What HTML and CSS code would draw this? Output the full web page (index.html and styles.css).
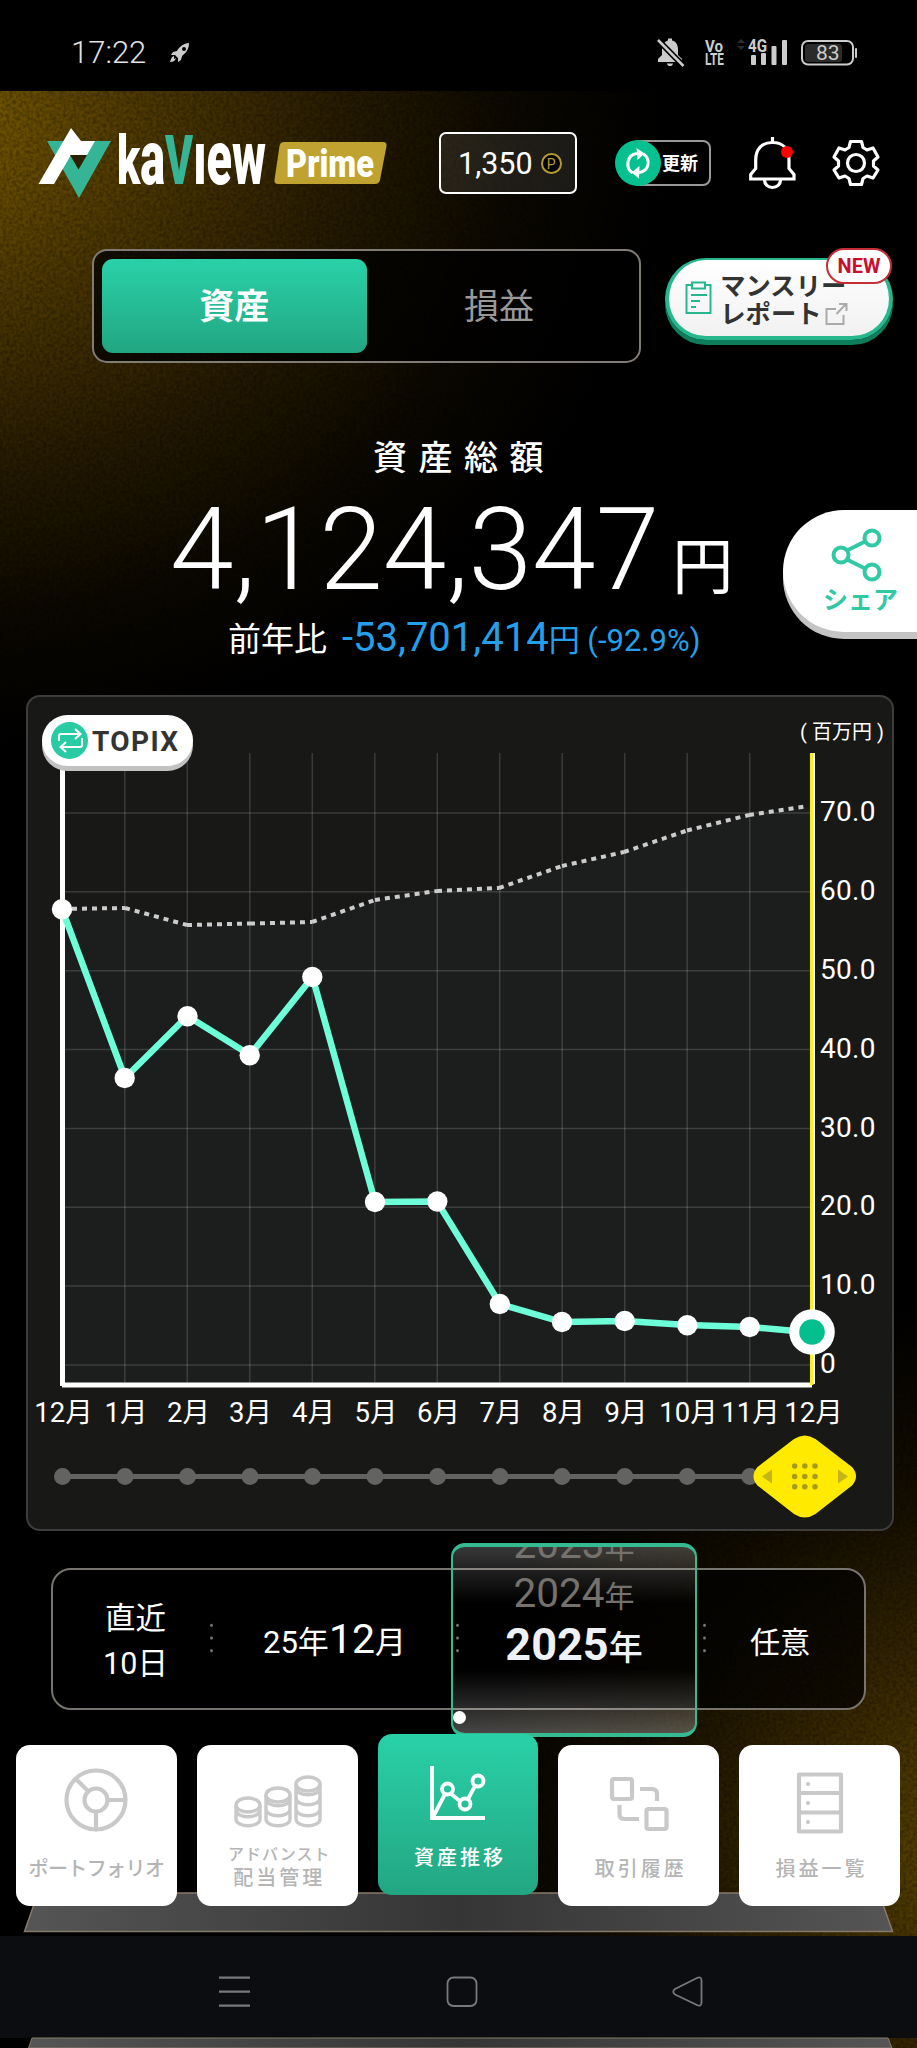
FILE: index.html
```html
<!DOCTYPE html>
<html lang="ja">

<head>
    <meta charset="UTF-8">
    <meta name="viewport" content="width=device-width, initial-scale=1.0">
    <title>kaView Prime</title>
    <link rel="stylesheet" href="styles.css">
</head>

<body>
    <div class="screen">
        <svg class="grain" width="917" height="1957">
            <filter id="noise" x="0" y="0" width="100%" height="100%">
                <feTurbulence type="fractalNoise" baseFrequency="0.3" numOctaves="2" seed="4" />
                <feColorMatrix values="0 0 0 0 0  0 0 0 0 0  0 0 0 0 0  2.2 0 0 0 -.75" />
            </filter>
            <rect width="917" height="1957" filter="url(#noise)" />
        </svg>

        <!-- Status bar -->
        <div class="status">
            <span class="clock">17:22</span>
            <svg class="rocket" width="20" height="20" viewBox="0 0 20 20" fill="#ccc">
                <path fill-rule="evenodd" d="M19 0C14 0 9 4 7 8L3 9 1 12l4 0 3 3 0 4 3-2 1-4C16 10 19 6 19 0zM14 4a2 2 0 1 1 0 4 2 2 0 0 1 0-4z" />
                <path d="M4 13C1 14 1 17 0 19c3 0 5-1 6-4l-2 1z" />
            </svg>
            <svg class="status-icons" width="202" height="30" viewBox="0 0 202 30" fill="#ccc">
                <path d="M1 24v-3l4-4V11C5 6 9 3 11 2.500V.5h4v2C18 3 21 6 21 11v6l4 4v3zM10 25.500h6c-.5 2-1.500 2.500-3 2.500s-2.500-.5-3-2.500z" />
                <path d="M0 1L26 27.500" stroke="#000" stroke-width="6" />
                <path d="M1 2L26.500 28" stroke="#ccc" stroke-width="2.500" />
                <text x="48" y="13.500" class="net" textLength="18" lengthAdjust="spacingAndGlyphs">Vo</text>
                <text x="48" y="27" class="net" textLength="19" lengthAdjust="spacingAndGlyphs">LTE</text>
                <path d="M80 5l4-4 4 4zM80 8l4 4 4-4z" fill="#2c2c2c" />
                <text x="91" y="13.500" class="net lte" textLength="19" lengthAdjust="spacingAndGlyphs">4G</text>
                <rect x="94" y="17" width="5" height="10" rx="1" />
                <rect x="104" y="15" width="5" height="12" rx="1" />
                <rect x="114.500" y="8" width="5" height="19" rx="1" />
                <rect x="125" y="2" width="5" height="25" rx="1" />
                <rect x="145" y="3" width="51" height="23.500" rx="6" fill="none" stroke="#ccc" stroke-width="2" />
                <rect x="148" y="6" width="37" height="18" rx="3" fill="#2b2b2b" />
                <rect x="198" y="10" width="2" height="10" rx="1" />
                <text x="159" y="22" class="battery">83</text>
            </svg>
        </div>

        <!-- Header -->
        <header class="header">
            <svg class="logo" width="350" height="74" viewBox="38 126 350 74">
                <path d="M47 141H111L79 198z" fill="#36b596" />
                <path d="M71 128L81 141H95L87 155H71L54 184H38.500z" fill="#fff" />
                <path d="M70 155H87L78.500 169.500z" fill="#2b2000" />
                <text y="184" class="brand" textLength="149" lengthAdjust="spacingAndGlyphs" x="117"><tspan class="tall">k</tspan>a<tspan class="tall v">V</tspan>ıew</text>
                <path d="M284 142H383q4 0 3.500 4L380 180q-.8 4-5 4H278q-4 0-3.500-4L279.500 146q.7-4 4.500-4z" fill="#bfa22f" />
                <text x="286" y="176.500" class="prime" textLength="88" lengthAdjust="spacingAndGlyphs">Prime</text>
            </svg>
            <div class="points">1,350<span class="point-mark">P</span></div>
            <div class="refresh">
                <svg width="46" height="46" viewBox="0 0 46 46" fill="none" stroke="#fff" stroke-width="3">
                    <circle cx="23" cy="23" r="23" fill="#06c08f" stroke="none" />
                    <path d="M17.500 33C10.500 28 11 15 22 13.500M28.500 14c7 5 6.500 17-4.500 18.500" />
                    <path d="M21.500 8l8 5.500-7 6.500zM24.500 26l-8 6.500 7.500 6z" fill="#fff" stroke="none" />
                </svg>
                <span>更新</span>
            </div>
            <svg class="bell" width="47" height="52" viewBox="0 0 47 52" fill="none" stroke="#fff" stroke-width="3.200">
                <path d="M23.500 0v6M1.700 42v-4.500l5-6V23C6.700 12 13 5.500 23.500 5.500S40 12 40 23v8.500l5 6V42z" />
                <path d="M15.500 43c0 4.500 3.500 7.500 8 7.500s8-3 8-7.500" />
                <circle cx="38" cy="15" r="6" fill="red" stroke="none" />
            </svg>
            <svg class="gear" width="48" height="48" viewBox="0 0 48 48" fill="none" stroke="#fff" stroke-width="3.200" stroke-linejoin="round">
                <path d="M18.500 2.500h11l1.500 6 4 2.500 6-2 5 9-4.500 4v5l4.500 4-5 8-6-2-4 2.500-1.500 6h-11l-1.500-6-4-2.500-6 2-5-8 4.500-4v-5L2 18l5-9 6 2 4-2.500z" />
                <circle cx="24" cy="24" r="8.500" />
            </svg>
        </header>

        <!-- Tabs -->
        <div class="tab-row">
            <div class="tabs">
                <div class="tab active">資産</div>
                <div class="tab">損益</div>
            </div>
            <div class="report">
                <svg width="27" height="34" viewBox="0 0 27 34" fill="none" stroke="#27b78e" stroke-width="2">
                    <path d="M7 4H1.500v28h24V4H20M7 1.500h13v6H7zM6 14h16M6 20h9M6 26h5" />
                </svg>
                <div class="report-text">マンスリー<br>レポート<svg width="23" height="22" viewBox="0 0 23 22" fill="none" stroke="#aaa" stroke-width="2">
                        <path d="M11 6H1.500v15h17V12M14 1h7.500v7M21 1L11.500 11" />
                    </svg></div>
                <span class="new">NEW</span>
            </div>
        </div>

        <!-- Total -->
        <section class="total">
            <h1>資産総額</h1>
            <p class="amount">4,124,347<span>円</span></p>
            <p class="diff">前年比<span class="minus">-53,701,414<small>円 (-92.9%)</small></span></p>
            <div class="share">
                <svg width="52" height="54" viewBox="0 0 52 54" fill="none" stroke="#30c9a4" stroke-width="4">
                    <path d="M15 23L35 13M15 31L35 41" />
                    <circle cx="10" cy="27" r="7.500" />
                    <circle cx="41" cy="10" r="7.500" />
                    <circle cx="41" cy="44" r="7.500" />
                </svg>
                <span>シェア</span>
            </div>
        </section>

        <!-- Chart -->
        <section class="chart">
            <div class="topix">
                <svg width="37" height="37" viewBox="0 0 37 37" fill="none" stroke="#fff" stroke-width="2">
                    <circle cx="18.500" cy="18.500" r="18.500" fill="#29cba4" stroke="none" />
                    <path d="M8 19v-5q0-2 2-2h19M24 7l5.500 5-5.500 5M31 16v7q0 2-2 2H10M15 20l-5.500 5 5.500 5" />
                </svg>
                <span>TOPIX</span>
            </div>
            <svg class="plot" width="864" height="832" viewBox="28 697 864 832">
                <path d="M62 909L125 908 187 925 250 923 312 922 375 900 437 891 499 888 562 866 624 852 687 830 749 815 812 806V1385H62z" fill="#1b1e1d" />
                <g stroke="#fff" stroke-opacity=".15" stroke-width="1.500">
                    <path d="M124.800 753V1383M187.300 753V1383M249.800 753V1383M312.300 753V1383M374.800 753V1383M437.300 753V1383M499.700 753V1383M562.200 753V1383M624.700 753V1383M687.200 753V1383M749.700 753V1383" />
                    <path d="M62 813H812M62 891.800H812M62 970.700H812M62 1049.500H812M62 1128.400H812M62 1207.200H812M62 1286.100H812M62 1365H812" />
                </g>
                <path d="M62.500 753V1386" stroke="#fff" stroke-width="5" />
                <path d="M62 1385H812" stroke="#fff" stroke-width="5" />
                <path d="M814 753V1384" stroke="#fff" stroke-width="2" />
                <path d="M811.700 753V1385" stroke="#f8ee30" stroke-width="3.500" />
                <g fill="none" stroke="#ccc" stroke-width="4" stroke-dasharray="5 5">
                    <path d="M62 909L125 908" />
                    <path d="M125 908L187 925" />
                    <path d="M187 925L250 923.500" />
                    <path d="M250 923.500L312 922" />
                    <path d="M312 922L375 900" />
                    <path d="M375 900L437 891" />
                    <path d="M437 891L499 888" />
                    <path d="M499 888L562 866" />
                    <path d="M562 866L624 852" />
                    <path d="M624 852L687 830.500" />
                    <path d="M687 830.500L749 815" />
                    <path d="M749 815L808 806" />
                </g>
                <polyline points="62,909 125,1078 187.500,1016 250,1055 312.500,977 375,1202 437,1201.500 500,1304 562,1322 625,1321 687,1325 749.500,1327 812,1332.500" fill="none" stroke="#6dffd8" stroke-width="6.500" />
                <g fill="#fff">
                    <circle cx="62" cy="909.300" r="10.200" />
                    <circle cx="124.700" cy="1078" r="10.200" />
                    <circle cx="187.500" cy="1016.300" r="10.200" />
                    <circle cx="249.700" cy="1055.300" r="10.200" />
                    <circle cx="312.300" cy="977" r="10.200" />
                    <circle cx="375" cy="1202" r="10.200" />
                    <circle cx="437.300" cy="1201.500" r="10.200" />
                    <circle cx="499.800" cy="1304" r="10.200" />
                    <circle cx="562" cy="1322" r="10.200" />
                    <circle cx="624.700" cy="1321" r="10.200" />
                    <circle cx="687.300" cy="1325.300" r="10.200" />
                    <circle cx="749.700" cy="1327" r="10.200" />
                </g>
                <g class="y-labels">
                    <text x="820" y="821">70.0</text>
                    <text x="820" y="900">60.0</text>
                    <text x="820" y="978.800">50.0</text>
                    <text x="820" y="1057.600">40.0</text>
                    <text x="820" y="1136.500">30.0</text>
                    <text x="820" y="1215.400">20.0</text>
                    <text x="820" y="1294.200">10.0</text>
                    <text x="820" y="1373">0</text>
                </g>
                <text x="800" y="739" class="unit" textLength="84">( 百万円 )</text>
                <circle cx="812" cy="1332" r="22.800" fill="#fff" />
                <circle cx="812" cy="1332" r="12.800" fill="#03bf8e" />
                <g class="x-labels">
                    <text x="63.500" y="1421.500">12月</text>
                    <text x="126" y="1421.500">1月</text>
                    <text x="188.500" y="1421.500">2月</text>
                    <text x="250.500" y="1421.500">3月</text>
                    <text x="313.500" y="1421.500">4月</text>
                    <text x="376" y="1421.500">5月</text>
                    <text x="438.500" y="1421.500">6月</text>
                    <text x="501" y="1421.500">7月</text>
                    <text x="563.500" y="1421.500">8月</text>
                    <text x="626" y="1421.500">9月</text>
                    <text x="688.500" y="1421.500">10月</text>
                    <text x="750.500" y="1421.500">11月</text>
                    <text x="813.500" y="1421.500">12月</text>
                </g>
                <path d="M62 1476.500H800" stroke="#636361" stroke-width="5" />
                <path d="M62.500 1476.500h.01M125 1476.500h.01M187.500 1476.500h.01M250 1476.500h.01M312.500 1476.500h.01M375 1476.500h.01M437.500 1476.500h.01M500 1476.500h.01M562 1476.500h.01M624.800 1476.500h.01M687.300 1476.500h.01M749.800 1476.500h.01" stroke="#636361" stroke-width="17" stroke-linecap="round" />
                <path d="M794 1439q10.700-7 21.500 0L852 1467q8 9 0 18.500L815.500 1514q-10.700 7-21.500 0L757.500 1485.500q-8-9 0-18.500z" fill="#ffea00" />
                <path d="M762 1476.500l10-7v14zM848 1476.500l-10-7v14z" fill="#c4b51c" />
                <path d="M794.600 1466h.01M804.800 1466h.01M815 1466h.01M794.600 1476.500h.01M804.800 1476.500h.01M815 1476.500h.01M794.600 1486.700h.01M804.800 1486.700h.01M815 1486.700h.01" stroke="#a79b18" stroke-width="5.500" stroke-linecap="round" />
            </svg>
        </section>

        <!-- Period -->
        <section class="period">
            <div class="recent">直近<br>10日</div>
            <i class="dots"></i>
            <div class="month">25年<b>12</b>月</div>
            <i class="dots"></i>
            <div class="year-space"></div>
            <i class="dots"></i>
            <div class="custom">任意</div>
            <div class="picker">
                <span class="year">2023<small>年</small></span>
                <span class="year">2024<small>年</small></span>
                <span class="year current">2025<small>年</small></span>
            </div>
            <span class="knob"></span>
        </section>

        <!-- Menu -->
        <nav class="menu">
            <svg class="shelf" width="874" height="42" viewBox="0 0 874 42">
                <linearGradient id="metal">
                    <stop offset="0" stop-color="#555" />
                    <stop offset=".5" stop-color="#353535" />
                    <stop offset="1" stop-color="#555" />
                </linearGradient>
                <path d="M15 1H856L869.500 39.500H1.500z" fill="url(#metal)" stroke="#877a68" stroke-width="1.500" />
            </svg>
            <div class="item">
                <svg width="64" height="64" viewBox="0 0 64 64">
                    <circle cx="32" cy="32" r="29.500" />
                    <circle cx="32" cy="32" r="11.500" />
                    <path d="M43 32H61M32 43V61M24 23L12 11" />
                </svg>
                <span class="kana">ポートフォリオ</span>
            </div>
            <div class="item two-line">
                <svg width="88" height="54" viewBox="0 0 88 54">
                    <ellipse cx="15" cy="30" rx="12" ry="7" />
                    <path d="M3 30v14c0 9 24 9 24 0V30M3 35c0 9 24 9 24 0" />
                    <ellipse cx="45" cy="20" rx="12" ry="7" />
                    <path d="M33 20v24c0 9 24 9 24 0V20M33 24c0 9 24 9 24 0M33 34c0 9 24 9 24 0" />
                    <ellipse cx="75" cy="9" rx="12" ry="7" />
                    <path d="M63 9v35c0 9 24 9 24 0V9M63 13c0 9 24 9 24 0M63 23c0 9 24 9 24 0M63 34c0 9 24 9 24 0" />
                </svg>
                <span><small>アドバンスト</small>配当管理</span>
            </div>
            <div class="item active">
                <svg width="56" height="56" viewBox="0 0 56 56">
                    <path d="M2 1V53H55M3 52L15 29M20 28L31 37M38 34L45 21" />
                    <circle cx="17.500" cy="24" r="5.500" />
                    <circle cx="35" cy="39" r="5.500" />
                    <circle cx="48" cy="16" r="5.500" />
                </svg>
                <span>資産推移</span>
            </div>
            <div class="item">
                <svg width="60" height="64" viewBox="0 0 60 64">
                    <rect x="3" y="11" width="20" height="20" rx="2" />
                    <rect x="37.500" y="41" width="20" height="20" rx="2" />
                    <path d="M31 21h12q5 0 5 5v7M10.500 37v9q0 5 5 5H30" />
                </svg>
                <span>取引履歴</span>
            </div>
            <div class="item">
                <svg width="50" height="64" viewBox="0 0 50 64">
                    <path d="M4 6.500h42v57H4zM4 25h42M4 44.500h42" stroke-linejoin="round" />
                    <path d="M13 16h.01M13 35h.01M13 54h.01" stroke-linecap="round" />
                </svg>
                <span>損益一覧</span>
            </div>
        </nav>

        <!-- Android buttons -->
        <div class="softkeys">
            <svg width="917" height="102" viewBox="0 0 917 102" fill="none" stroke="#78797c" stroke-width="1.800" stroke-linejoin="round">
                <path d="M219 41.700h31M219 55.700h31M219 69.700h31" stroke-width="2.300" />
                <rect x="447.500" y="41.500" width="29" height="28.500" rx="6" />
                <path d="M675 53L697 42q4-2 4.500 2v23q-.5 4-4.500 2L675 58.500q-3.500-2.700 0-5.500z" />
            </svg>
        </div>
        <div class="floor">
            <svg width="874" height="10" viewBox="0 0 874 10">
                <path d="M9 0L5.500 10H869L865 0z" fill="url(#metal)" stroke="#877a68" />
            </svg>
        </div>
    </div>
</body>

</html>
```

FILE: styles.css
```css
*,
*::before,
*::after {
    box-sizing: border-box;
}

body {
    margin: 0;
    background: #000;
    color: #fff;
    font-family: Roboto, "Noto Sans CJK JP", sans-serif;
}

h1,
p {
    margin: 0;
    font-weight: 400;
}

svg {
    display: block;
    flex: none;
    overflow: visible;
}

.screen {
    position: relative;
    display: flex;
    flex-direction: column;
    width: 917px;
    height: 2048px;
    overflow: hidden;
    background:
        radial-gradient(ellipse 740px 640px at -60px 120px, #7a5c00 0%, #513b00 25%, #261b00 55%, #0b0800 78%, transparent 100%),
        radial-gradient(ellipse 560px 560px at 990px 1850px, #604800 0%, #3d2c00 30%, #140e00 65%, transparent 100%),
        #000;
}

/* dark grain over the gold glow */
.grain {
    position: absolute;
    top: 91px;
    left: 0;
    opacity: .3;
}

.status {
    position: relative;
    display: flex;
    align-items: center;
    height: 91px;
    padding: 0 58px 11px 71px;
    background: #000;
}

.clock {
    width: 99px;
    margin-top: 24px;
    font-size: 31px;
    font-weight: 300;
    color: #e2e2e2;
}

.rocket {
    margin-top: 26px;
}

.status-icons {
    margin: 26px 0 0 auto;
}

.net {
    font-size: 17px;
    font-weight: 700;
}

.net.lte {
    font-size: 18px;
}

.battery {
    font-size: 21px;
}

.header {
    position: relative;
    display: flex;
    align-items: center;
    height: 144px;
    padding-left: 38px;
}

.brand {
    font-size: 76px;
    font-weight: 900;
    fill: #fff;
}

.brand .tall {
    font-size: 69px;
}

.brand .v {
    fill: #36b596;
}

.prime {
    font-size: 38px;
    font-weight: 900;
    fill: #fff;
}

.points {
    display: flex;
    align-items: center;
    width: 138px;
    height: 62px;
    margin-left: 51px;
    padding-left: 17px;
    border: 2.5px solid #fff;
    border-radius: 7px;
    background: rgba(255, 255, 255, .09);
    font-size: 30.5px;
}

.point-mark {
    width: 21px;
    height: 21px;
    margin-left: 8px;
    border: 2px solid #b59b2c;
    border-radius: 50%;
    background: #000;
    color: #b59b2c;
    font-size: 14px;
    line-height: 18px;
    text-align: center;
}

.refresh {
    display: flex;
    align-items: center;
    width: 96px;
    height: 46px;
    margin-left: 38px;
    position: relative;
    font-size: 18px;
    font-weight: 700;
}

.refresh::before {
    content: "";
    position: absolute;
    inset: 0 0 0 16px;
    border: 2px solid #999;
    border-radius: 8px;
}

.refresh svg {
    position: relative;
}

.refresh span {
    margin: -2px 0 0 1px;
}

.bell {
    margin-left: 38px;
}

.gear {
    margin-left: 36px;
}

.tab-row {
    position: relative;
    display: flex;
    margin: 14px 24px 0 92px;
}

.tabs {
    display: flex;
    width: 550px;
    height: 114px;
    padding: 8px;
    border: 2px solid #807b75;
    border-radius: 15px;
    background: rgba(0, 0, 0, .72);
}

.tab {
    flex: 1;
    border-radius: 11px;
    font-size: 35px;
    line-height: 98px;
    text-align: center;
    color: #999;
}

.tab.active {
    background: linear-gradient(#29d1a8, #22a682);
    color: #fff;
    font-weight: 700;
}

.report {
    position: relative;
    display: flex;
    width: 228px;
    height: 82px;
    margin: 9px 0 0 24px;
    padding: 21px 0 0 16px;
    border: 4px solid #27b78e;
    border-top-width: 2px;
    border-radius: 42px;
    background: linear-gradient(#fff, #f1f1f1);
    box-shadow: 0 5px #0e7d5c;
}

.report-text {
    margin: -8px 0 0 8px;
    font-size: 25.3px;
    font-weight: 700;
    line-height: 28px;
    color: #333;
    white-space: nowrap;
}

.report-text svg {
    display: inline-block;
    margin-left: 4px;
    vertical-align: -2px;
}

.new {
    position: absolute;
    top: -12px;
    right: -3px;
    width: 66px;
    height: 36px;
    border: 2.5px solid #c32f35;
    border-radius: 18px;
    background: #fff;
    color: #c8102e;
    font-size: 20px;
    font-weight: 700;
    line-height: 32px;
    text-align: center;
}

.total {
    position: relative;
    height: 332px;
}

.total h1 {
    padding: 71px 0 0 373px;
    font-size: 34px;
    font-weight: 500;
    line-height: 48px;
    letter-spacing: 11.5px;
}

.amount {
    padding: 10px 0 0 170px;
    font-size: 114.7px;
    font-weight: 300;
    line-height: 116px;
    white-space: nowrap;
}

.amount span {
    margin-left: 13px;
    font-size: 61px;
    font-weight: 400;
}

.diff {
    height: 50px;
    margin-top: -13px;
    padding-left: 228px;
    font-size: 33px;
    line-height: 50px;
    white-space: nowrap;
}

.minus {
    margin-left: 15px;
    color: #24a0ea;
    font-size: 40px;
}

.minus small {
    font-size: 31px;
}

.share {
    position: absolute;
    top: 147px;
    right: 0;
    width: 134px;
    height: 122px;
    padding: 18px 0 0 40px;
    border-radius: 62px 0 0 62px;
    background: #fff;
    box-shadow: 0 7px #c4c4c4;
    color: #30c9a4;
    font-size: 25px;
    font-weight: 700;
    line-height: 37px;
}

.share svg {
    margin-left: 8px;
}

.chart {
    position: relative;
    height: 836px;
    margin: 0 23px 0 26px;
    border: 2px solid #3e3d3b;
    border-radius: 14px;
    background: #181817;
}

.topix {
    position: absolute;
    top: 18px;
    left: 14px;
    display: flex;
    align-items: center;
    width: 151px;
    height: 51px;
    padding-left: 9px;
    border-radius: 26px;
    background: #fff;
    box-shadow: 0 5px #c2c2c2;
    color: #333;
    font-size: 28px;
    font-weight: 700;
    letter-spacing: 1.4px;
}

.topix span {
    margin: 2px 0 0 4px;
}

.y-labels,
.x-labels {
    font-size: 28px;
    fill: #fff;
}

.y-labels {
    letter-spacing: .3px;
}

.x-labels {
    font-size: 27.5px;
    text-anchor: middle;
}

.unit {
    font-size: 20px;
    fill: #fff;
}

.period {
    position: relative;
    display: flex;
    align-items: center;
    height: 142px;
    margin: 37px 51px 0;
    border: 2px solid #77736d;
    border-radius: 20px;
    background: rgba(0, 0, 0, .7);
    font-size: 30px;
}

.recent {
    width: 157px;
    padding: 4px 0 0 8px;
    font-size: 30.5px;
    line-height: 45px;
    text-align: center;
}

.dots {
    width: 3px;
    height: 41px;
    background: radial-gradient(circle, #777 1.2px, transparent 1.6px) 0 0 / 3px 12.7px;
}

.month {
    width: 243px;
    font-size: 31px;
    text-align: center;
}

.month b {
    font-size: 41px;
    font-weight: 400;
}

.year-space {
    width: 244px;
}

.custom {
    flex: 1;
    padding: 2px 10px 0 0;
    text-align: center;
}

.picker {
    position: absolute;
    top: -27px;
    left: 398px;
    display: flex;
    flex-direction: column;
    align-items: center;
    width: 246px;
    height: 194px;
    overflow: hidden;
    border: 2.5px solid #35ba92;
    border-top-width: 4px;
    border-bottom-width: 4px;
    border-radius: 14px;
    background: linear-gradient(rgba(255, 255, 255, .22), transparent 30%, transparent 66%, rgba(255, 255, 255, .27));
}

.year {
    height: 49px;
    font-size: 40.5px;
    line-height: 49px;
    color: #75726e;
}

.year:first-child {
    margin-top: -27px;
}

.year small {
    font-size: 30px;
}

.year.current {
    font-size: 45px;
    font-weight: 700;
    line-height: 54px;
    color: #eef2f6;
}

.current small {
    font-size: 34px;
    font-weight: 500;
}

.knob {
    position: absolute;
    left: 400px;
    top: 141px;
    width: 13px;
    height: 13px;
    border-radius: 50%;
    background: #fff;
}

.menu {
    position: relative;
    display: flex;
    gap: 20px;
    height: 161px;
    margin: 35px 17px 0 16px;
}

.shelf {
    position: absolute;
    top: 147px;
    left: 7px;
}

.item {
    position: relative;
    flex: 1;
    display: flex;
    flex-direction: column;
    align-items: center;
    height: 161px;
    padding-top: 23px;
    border-radius: 14px;
    background: #fff;
    color: #b5b5b5;
    font-size: 20px;
    font-weight: 500;
    letter-spacing: 3px;
    white-space: nowrap;
}

.item svg {
    fill: none;
    stroke: #c9c9c9;
    stroke-width: 4.2px;
}

.item span {
    margin-top: 22px;
    padding-left: 4px;
    line-height: 30px;
    text-align: center;
}

.item .kana {
    padding: 0;
    letter-spacing: -.6px;
}

.item.two-line {
    padding-top: 30px;
}

.item.two-line svg {
    stroke-width: 3.4px;
}

.item.two-line span {
    margin-top: 15px;
    line-height: 24px;
}

.two-line small {
    display: block;
    font-size: 16px;
    letter-spacing: 1px;
    line-height: 22px;
}

.item.active {
    top: -11px;
    background: linear-gradient(#29d1a8, #22a682);
    color: #fff;
}

.item.active svg {
    margin-top: 8px;
    stroke: #fff;
    stroke-width: 3.8px;
}

.softkeys {
    position: relative;
    height: 102px;
    margin-top: 30px;
    background: #0c0d11;
}

.floor {
    position: relative;
    padding-left: 23px;
}
```
